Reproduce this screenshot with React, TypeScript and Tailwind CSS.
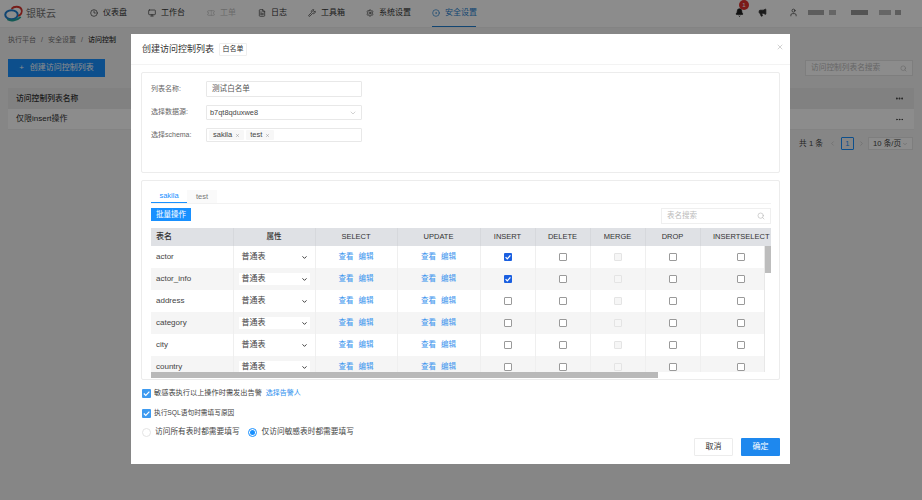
import {
  Bell,
  ChevronDown,
  ChevronLeft,
  ChevronRight,
  CircleDot,
  Clock3,
  FileText,
  Megaphone,
  Monitor,
  MoreHorizontal,
  Search,
  Settings,
  Ticket,
  User,
  Wrench,
  X,
} from "lucide-react";

const navItems = [
  { label: "仪表盘", Icon: Clock3, w: "w-[58px]" },
  { label: "工作台", Icon: Monitor, w: "w-[59px]" },
  { label: "工单", Icon: Ticket, w: "w-[51px]", disabled: true },
  { label: "日志", Icon: FileText, w: "w-[50px]" },
  { label: "工具箱", Icon: Wrench, w: "w-[58px]" },
  { label: "系统设置", Icon: Settings, w: "w-[66px]" },
  { label: "安全设置", Icon: CircleDot, w: "w-[44px]", active: true },
];

const tables = [
  { name: "actor", insert: true },
  { name: "actor_info", insert: true },
  { name: "address" },
  { name: "category" },
  { name: "city" },
  { name: "country" },
];

function Box({ checked, disabled }: { checked?: boolean; disabled?: boolean }) {
  if (checked) {
    return (
      <span className="inline-flex w-[8px] h-[8px] rounded-[1px] bg-[#1a5fe0] items-center justify-center align-middle">
        <svg viewBox="0 0 10 10" className="w-[8px] h-[8px]">
          <path d="M2 5.2l2.1 2.1L8 3" fill="none" stroke="#fff" strokeWidth="1.6" />
        </svg>
      </span>
    );
  }
  return (
    <span
      className={
        disabled
          ? "inline-block w-[8px] h-[8px] rounded-[1px] border border-[#e4e4e4] bg-[#f6f6f6] align-middle"
          : "inline-block w-[8px] h-[8px] rounded-[1px] border border-[#9a9a9a] bg-white align-middle"
      }
    />
  );
}

function BlueCheck() {
  return (
    <span className="w-[9px] h-[9px] rounded-[1px] bg-[#3f9bf0] flex items-center justify-center shrink-0">
      <svg viewBox="0 0 10 10" className="w-[9px] h-[9px]">
        <path d="M2 5l2.2 2.2L8.2 3" fill="none" stroke="#fff" strokeWidth="1.3" />
      </svg>
    </span>
  );
}

function Tag({ label }: { label: string }) {
  return (
    <span className="h-[10px] px-[4px] bg-[#f7f7f7] rounded-[1px] flex items-center gap-[3px] text-[7.5px] text-[#444]">
      {label}
      <X className="w-[5px] h-[5px] text-[#888]" strokeWidth={2} />
    </span>
  );
}

function ActionLinks() {
  return (
    <div className="flex justify-center gap-[5px] text-[#3a94ee] text-[7.5px]">
      <span>查看</span>
      <span>编辑</span>
    </div>
  );
}

export default function App() {
  return (
    <div className="relative w-[922px] h-[500px] overflow-hidden bg-[#f5f5f5] font-['Liberation_Sans','Noto_Sans_CJK_SC',sans-serif] text-[8px] text-[#333]">
      {/* page under the mask */}
      <header className="h-[28px] bg-white flex items-center border-b border-[#eee]">
        <div className="w-[90px] pl-[4px] flex items-center gap-[2px]">
          <svg viewBox="0 0 24 20" className="w-[20px] h-[17px]">
            <ellipse cx="9" cy="11.5" rx="7.5" ry="5.5" fill="none" stroke="#1f7fd0" strokeWidth="2.4" />
            <path d="M9 4.5c3-3.5 10-3.5 12 .5 1.5 3.5-1 7-4 8" fill="none" stroke="#d8352f" strokeWidth="2.2" />
            <path d="M4 17c4 2.5 12 1.500 16-3" fill="none" stroke="#25a59a" strokeWidth="2.200" />
          </svg>
          <span className="text-[10px] text-[#777]">银联云</span>
        </div>
        <nav className="flex h-full">
          {navItems.map(({ label, Icon, w, disabled, active }) => (
            <div
              key={label}
              className={`${w} h-full flex items-center gap-[5px] pb-[1px] ${disabled ? "opacity-30" : ""} ${
                active ? "text-[#1f7fd0] border-b border-[#1f7fd0]" : ""
              }`}
            >
              <Icon className="w-[8px] h-[8px] shrink-0" />
              <span className="whitespace-nowrap">{label}</span>
            </div>
          ))}
        </nav>
        <div className="ml-[259px] relative flex items-center pb-[2px]">
          <Bell className="w-[9px] h-[9px] text-[#222] fill-[#222]" />
          <span className="absolute left-[4px] top-[-8px] w-[10px] h-[10px] rounded-full bg-[#e0302c] text-white text-[6px] flex items-center justify-center">
            1
          </span>
          <Megaphone className="ml-[14px] w-[9px] h-[9px] text-[#333] fill-[#333]" />
          <User className="ml-[22px] w-[9px] h-[9px] text-[#444]" />
          <span className="ml-[10px] w-[16px] h-[5px] bg-[#aaa]" />
          <span className="ml-[5px] w-[7px] h-[5px] bg-[#bbb]" />
          <span className="ml-[15px] w-[17px] h-[5px] bg-[#999]" />
          <span className="ml-[11px] w-[12px] h-[5px] bg-[#bbb]" />
          <span className="ml-[4px] w-[6px] h-[5px] bg-[#aaa]" />
        </div>
      </header>

      <div className="px-[8px] pt-[7px]">
        <div className="flex gap-[5px] text-[#777] text-[7px] h-[10px] items-center">
          <span>执行平台</span>
          <span>/</span>
          <span>安全设置</span>
          <span>/</span>
          <span className="text-[#333] font-medium">访问控制</span>
        </div>
        <div className="mt-[14px] flex justify-between items-center">
          <div className="w-[97px] h-[18px] bg-[#1890ff] text-white flex items-center justify-center gap-[6px] text-[8px]">
            <span>+</span>
            <span>创建访问控制列表</span>
          </div>
          <div className="mr-[1px] w-[108px] h-[16px] bg-white border border-[#e6e6e6] flex items-center justify-between px-[5px] text-[7.7px] text-[#bbb]">
            <span>访问控制列表名搜索</span>
            <Search className="w-[7px] h-[7px]" />
          </div>
        </div>
        <div className="mt-[11px] h-[21px] bg-[#ececec] flex items-center justify-between pl-[8px] pr-[10px] font-medium text-[7.8px]">
          <span>访问控制列表名称</span>
          <MoreHorizontal className="w-[9px] h-[9px]" strokeWidth={3} />
        </div>
        <div className="h-[21px] bg-white flex items-center justify-between pl-[8px] pr-[10px] border-b border-[#eee]">
          <span>仅限insert操作</span>
          <MoreHorizontal className="w-[9px] h-[9px]" />
        </div>
        <div className="mt-[7px] mr-[1px] flex justify-end items-center text-[#444] text-[7.700px] whitespace-nowrap">
          <span>共 1 条</span>
          <ChevronLeft className="ml-[6px] w-[7px] h-[7px] text-[#bbb]" />
          <span className="ml-[5px] w-[13px] h-[13px] border border-[#1890ff] rounded-[1px] text-[#1890ff] flex items-center justify-center">
            1
          </span>
          <ChevronRight className="ml-[4px] w-[7px] h-[7px] text-[#bbb]" />
          <span className="ml-[3px] w-[45px] h-[13px] bg-white border border-[#e6e6e6] flex items-center justify-between px-[4px]">
            10 条/页
            <ChevronDown className="w-[6px] h-[6px] text-[#aaa]" />
          </span>
        </div>
      </div>

      {/* mask */}
      <div className="absolute inset-0 bg-black/45" />

      {/* modal */}
      <div className="absolute left-[131px] top-[34px] w-[659px] h-[430px] bg-white flex flex-col">
        <div className="h-[31px] px-[11px] border-b border-[#f3f3f3] flex items-center gap-[5px] relative shrink-0">
          <span className="text-[9px] text-[#333] leading-none">创建访问控制列表</span>
          <span className="w-[28px] h-[13px] bg-white border border-[#eee] rounded-[1px] flex items-center justify-center text-[7px]">
            白名单
          </span>
          <X className="absolute right-[6px] top-[9px] w-[8px] h-[8px] text-[#bbb]" />
        </div>

        <div className="mx-[10px] mt-[7px] h-[101px] border border-[#ececec] rounded-[2px] pl-[9px] pt-[8px] flex flex-col text-[7.6px] shrink-0">
          <div className="h-[16px] flex items-center">
            <span className="w-[55px] text-[#666] text-[7px]">列表名称:</span>
            <div className="w-[156px] h-[16px] border border-[#e8e8e8] rounded-[1px] flex items-center px-[5px] text-[#555]">
              测试白名单
            </div>
          </div>
          <div className="mt-[8px] h-[15px] flex items-center">
            <span className="w-[55px] text-[#666] text-[7px]">选择数据源:</span>
            <div className="w-[156px] h-[15px] border border-[#e8e8e8] rounded-[1px] flex items-center justify-between px-[3px] text-[7.400px] text-[#444]">
              b7qt8qduxwe8
              <ChevronDown className="w-[8px] h-[8px] mr-[1px] text-[#bbb]" />
            </div>
          </div>
          <div className="mt-[8px] h-[14px] flex items-center">
            <span className="w-[55px] text-[#666] text-[7px]">选择schema:</span>
            <div className="w-[156px] h-[14px] border border-[#e8e8e8] rounded-[1px] flex items-center gap-[2px] px-[2px]">
              <Tag label="sakila" />
              <Tag label="test" />
            </div>
          </div>
        </div>

        <div className="mx-[10px] mt-[7px] h-[200px] border border-[#ececec] rounded-[2px] pl-[9px] pr-[8px] flex flex-col shrink-0">
          <div className="mt-[9px] h-[14px] border-b border-[#f2f2f2] flex items-end shrink-0">
            <span className="w-[36px] h-[14px] border-b border-[#1890ff] text-[#1890ff] flex items-center justify-center text-[7.5px]">
              sakila
            </span>
            <span className="w-[30px] h-[13px] bg-[#fafafa] text-[#777] flex items-center justify-center text-[7.5px]">
              test
            </span>
          </div>
          <div className="mt-[4px] flex justify-between items-start h-[20px] shrink-0">
            <div className="w-[40px] h-[13px] bg-[#1890ff] text-white flex items-center justify-center text-[7.5px]">
              批量操作
            </div>
            <div className="w-[110px] h-[16px] border border-[#efefef] flex items-center justify-between pl-[5px] pr-[5px] text-[7.5px] text-[#bbb]">
              <span>表名搜索</span>
              <Search className="w-[8px] h-[8px]" />
            </div>
          </div>
          <div className="relative h-[150px] overflow-hidden">
            <table className="w-[631px] table-fixed border-collapse text-[8px] text-[#444]">
              <colgroup>
                <col className="w-[82px]" />
                <col className="w-[82px]" />
                <col className="w-[82px]" />
                <col className="w-[83px]" />
                <col className="w-[55px]" />
                <col className="w-[55px]" />
                <col className="w-[55px]" />
                <col className="w-[55px]" />
                <col className="w-[82px]" />
              </colgroup>
              <thead>
                <tr className="h-[18px] bg-[#dfe1e5] text-[#333] text-[7.5px]">
                  <th className="text-left pl-[5px] text-[8px] font-medium">表名</th>
                  {["属性", "SELECT", "UPDATE", "INSERT", "DELETE", "MERGE", "DROP", "INSERTSELECT"].map((h) => (
                    <th key={h} className="font-medium border-l border-[#d6d8dc] whitespace-nowrap">
                      {h}
                    </th>
                  ))}
                </tr>
              </thead>
              <tbody>
                {tables.map((t, i) => (
                  <tr key={t.name} className={i % 2 === 1 ? "h-[22px] bg-[#f5f5f5]" : "h-[22px] bg-white"}>
                    <td className="pl-[5px]">{t.name}</td>
                    <td className="border-l border-[#efefef] px-[5px]">
                      <div className="h-[12px] bg-white flex items-center justify-between pl-[3px] pr-[2px]">
                        普通表
                        <ChevronDown className="w-[7px] h-[7px] text-[#222]" strokeWidth={3} />
                      </div>
                    </td>
                    <td className="border-l border-[#efefef]">
                      <ActionLinks />
                    </td>
                    <td className="border-l border-[#efefef]">
                      <ActionLinks />
                    </td>
                    <td className="border-l border-[#efefef] text-center">
                      <Box checked={t.insert} />
                    </td>
                    <td className="border-l border-[#efefef] text-center">
                      <Box />
                    </td>
                    <td className="border-l border-[#efefef] text-center">
                      <Box disabled />
                    </td>
                    <td className="border-l border-[#efefef] text-center">
                      <Box />
                    </td>
                    <td className="border-l border-[#efefef] text-center">
                      <Box />
                    </td>
                  </tr>
                ))}
              </tbody>
            </table>
            <div className="absolute right-0 top-[18px] bottom-[6px] w-[7px] bg-white border-l border-[#e8e8e8]">
              <div className="h-[27px] bg-[#bdbdbd]" />
            </div>
            <div className="absolute left-0 right-0 bottom-0 h-[6px] bg-white">
              <div className="w-[507px] h-full bg-[#b9b9b9]" />
            </div>
          </div>
        </div>

        <div className="px-[11px] mt-[8px] flex items-center gap-[3px] h-[10px] text-[7.2px] text-[#444]">
          <BlueCheck />
          <span>敏感表执行以上操作时需发出告警</span>
          <span className="ml-[1px] text-[7px] text-[#2f8fee]">选择告警人</span>
        </div>
        <div className="px-[11px] mt-[10px] flex items-center gap-[3px] h-[10px] text-[6.7px] text-[#444]">
          <BlueCheck />
          <span>执行SQL语句时需填写原因</span>
        </div>
        <div className="px-[11px] mt-[9px] flex items-center h-[10px] text-[7.7px] text-[#444]">
          <span className="w-[9px] h-[9px] rounded-full border border-[#e4e4e4] shrink-0" />
          <span className="ml-[4px]">访问所有表时都需要填写</span>
          <span className="ml-[8px] w-[9px] h-[9px] rounded-full border border-[#1890ff] flex items-center justify-center shrink-0">
            <span className="w-[5px] h-[5px] rounded-full bg-[#1890ff]" />
          </span>
          <span className="ml-[5px]">仅访问敏感表时都需要填写</span>
        </div>

        <div className="mt-[1px] pr-[10px] flex justify-end gap-[8px]">
          <span className="w-[39px] h-[18px] border border-[#ececec] rounded-[1px] flex items-center justify-center">
            取消
          </span>
          <span className="w-[39px] h-[18px] bg-[#1e88ee] rounded-[1px] text-white flex items-center justify-center">
            确定
          </span>
        </div>
      </div>
    </div>
  );
}
